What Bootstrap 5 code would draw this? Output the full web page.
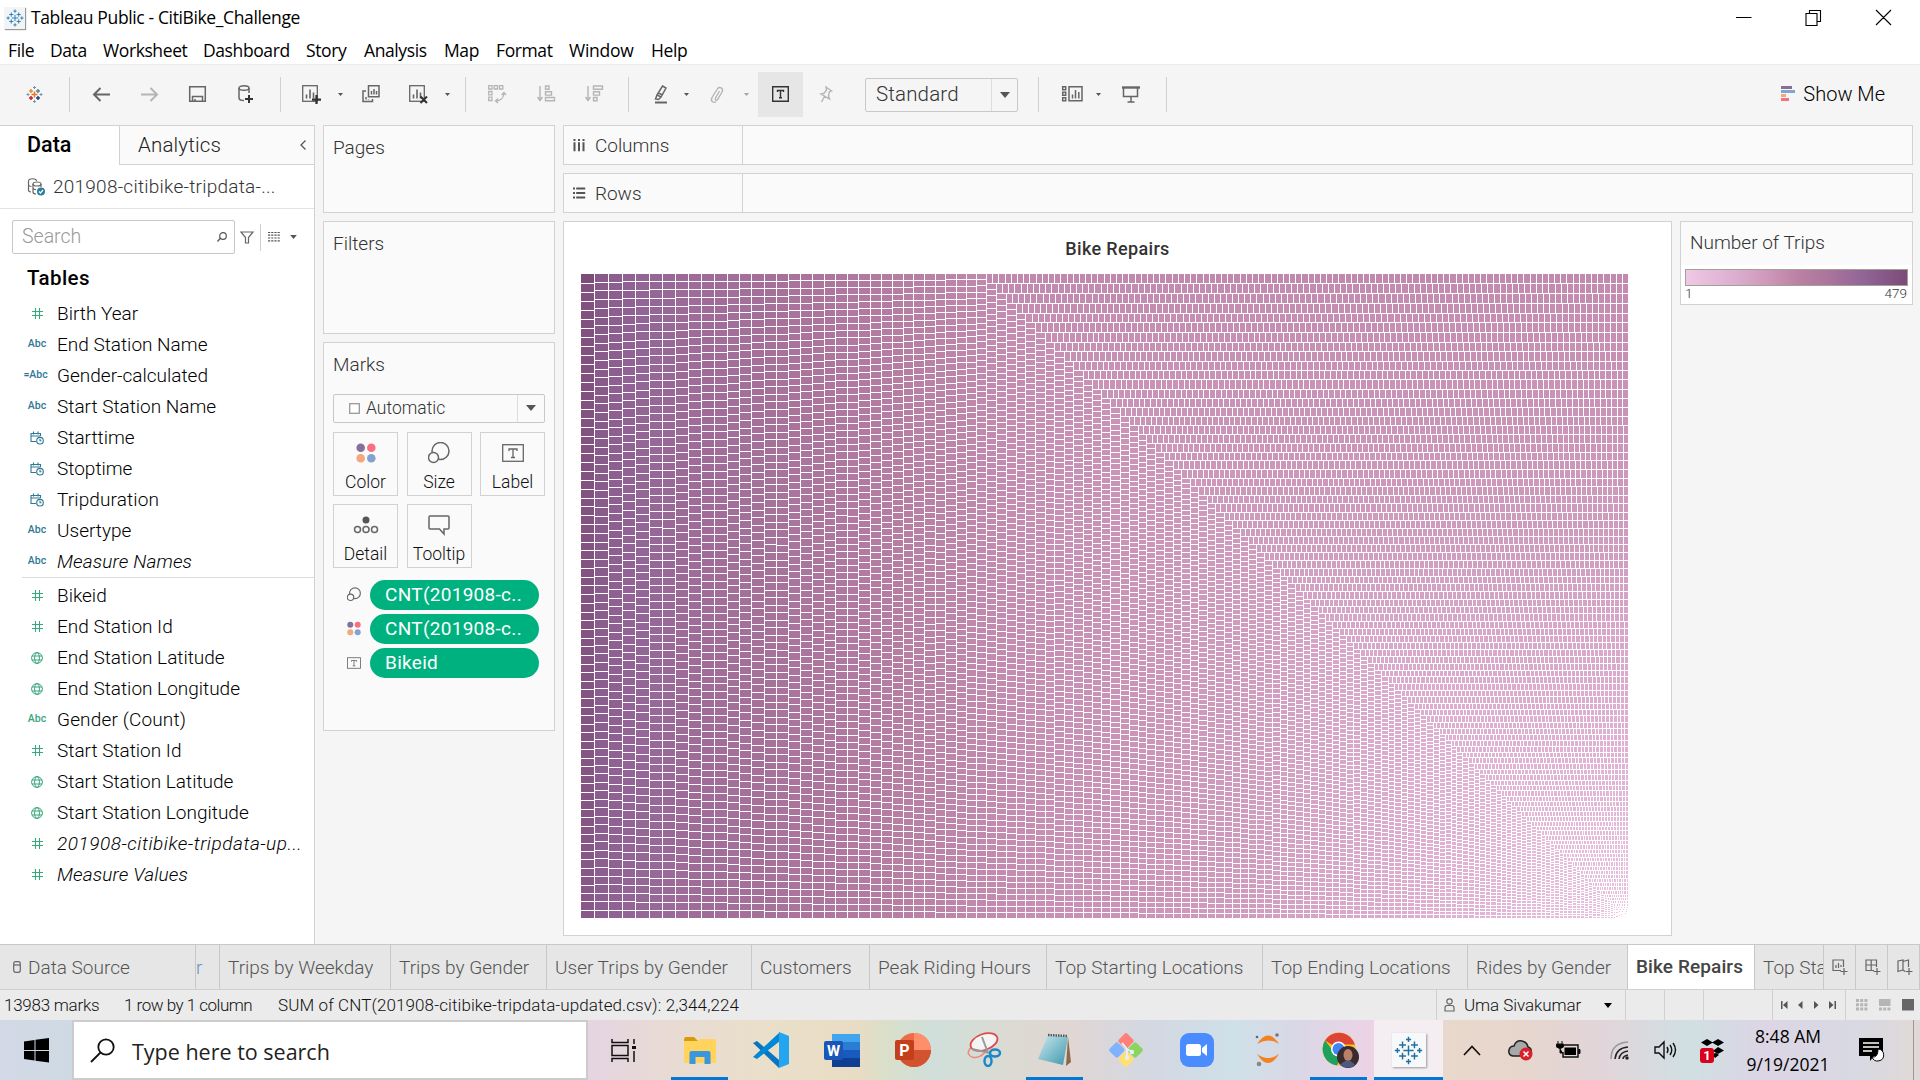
<!DOCTYPE html>
<html lang="en">
<head>
<meta charset="utf-8">
<title>Tableau Public - CitiBike_Challenge</title>
<link href="https://cdn.jsdelivr.net/npm/bootstrap@5.3.0/dist/css/bootstrap.min.css" rel="stylesheet">
<style>
:root{--line:#d2d2d2;--ink:#666}
html,body{height:100%}
body{width:1920px;height:1080px;overflow:hidden;background:#f5f5f5;font-family:Roboto,"Liberation Sans",sans-serif;font-weight:300;font-size:19px;line-height:1;color:#000;white-space:nowrap}
svg{display:block;flex:none;overflow:visible}
.segoe{font-family:"Open Sans","Noto Sans",sans-serif;font-weight:400}
.ln{fill:none;stroke:var(--ink);stroke-width:1.5}
.titlebar{height:34px;padding:1px 0 0 4px}
.titlebar .cap{font-size:17.5px;letter-spacing:-.37px;margin-left:6px}
.appicon{width:21px;height:22px;background:#f2f4f6;box-shadow:1px 1px 1px #999}
.menubar{height:30px;padding:4px 0 0 8px;font-size:17.5px;letter-spacing:-.4px}
.toolbar{height:61px;border-top:1px solid #ececec;padding-bottom:2px}
.slot{height:45px;display:flex;align-items:center;justify-content:center;flex:none}
.vsep{width:1px;height:35px;background:#cfcfcf;flex:none}
.main{height:819px}
.side{width:315px;background:#fff;border-top:1px solid var(--line);border-right:1px solid var(--line)}
.sidetabs{height:39px}
.sidetabs .on{width:119px;padding:0 0 2px 27px;font-weight:500;font-size:21.5px}
.sidetabs .off{background:#fafafa;border-left:1px solid var(--line);border-bottom:1px solid var(--line);font-size:20.5px;letter-spacing:.15px;padding-left:18px;color:#222}
.srcrow{height:44px;border-bottom:1px solid #e2e2e2;padding-left:28px;color:#333}
.searchbox{width:223px;height:34px;border:1px solid #c8c8c8;border-radius:2px;padding:0 6px 0 9px;color:#999;font-size:19.5px}
.tables{font-weight:500;font-size:20.5px;padding:14px 0 0 27px;height:44px;letter-spacing:.4px}
.fld{height:31px;display:flex;align-items:center}
.fld .ic{width:22px;margin-left:26px;margin-right:9px;display:flex;justify-content:center}
.fld.it span{font-style:italic;letter-spacing:.15px}
.fld.it .wide{letter-spacing:.52px}
.abc{font-size:10.5px;font-weight:500;color:#2f7896}
.abc.g{color:#3aa67c}
.pane{background:#fafafa;border:1px solid var(--line);color:#333}
.shelf{height:40px}
.shelf .lab{width:179px;border-right:1px solid var(--line);padding-left:9px;letter-spacing:-.05px}
.cards{width:232px;margin-left:8px}
.cards h6,.leg h6{font-size:19px;font-weight:300;margin:0;color:#333}
.markbtn{width:65px;height:64px;border:1px solid var(--line);background:#fafafa;font-size:17.5px;color:#111;padding:7px 0 3px;border-radius:0}
.sel{border:1px solid #c8c8c8;border-radius:2px}
.pill{width:169px;height:30px;border-radius:15px;background:#00b180;color:#fff;font-weight:400;padding-left:15px;font-size:19px;letter-spacing:.3px}
.viz{width:1109px;background:#fff;border:1px solid var(--line)}
.viz h5{font-size:18px;line-height:18px;font-weight:500;color:#333;margin:18px 0 16px;text-align:center;letter-spacing:.35px}
.leg{width:233px;height:84px;background:#fff}
.leg .top{height:43px;background:#fafafa;padding-left:9px}
.ramp{height:17px;border:1px solid #a89f94;margin:4px 4px 0;background:linear-gradient(90deg,#eec9e5,#dcaed0 22%,#cf9abb 36%,#bc82a4 50%,#aa749c 65%,#926598 80%,#7c4d79 99%)}
.tabs{height:46px;background:#e6e6e6;border-top:1px solid #c8c8c8;border-bottom:1px solid #d0d0d0;color:#555}
.tabs>div{border-right:1px solid #c8c8c8;display:flex;align-items:center;padding-left:8px;overflow:hidden;flex:none}
.status{height:30px;background:#ebebeb;font-size:17px;color:#111}
.status .cell{border-left:1px solid #d0d0d0;height:30px;flex:none;display:flex;align-items:center}
.task{height:60px;background:linear-gradient(90deg,#d3d8e6 0,#cedae3 72px,#e5d5e0 600px,#e8dad4 660px,#eadfca 760px,#e8dcc4 858px,#dadfc9 885px,#d0dfda 930px,#dcdad2 1020px,#e0d6d4 1070px,#d3d8e2 1150px,#cfe0e8 1235px,#dad7e6 1300px,#ecd3e6 1372px,#e8d8cc 1450px,#e6d6cc 1520px,#e2d5da 1600px,#d0dfe2 1690px,#dcd5e5 1765px,#d8d9e2 1860px,#e0d9d8 1915px)}
.task .box{width:516px;height:60px;border:2px solid #ccc;background:#fff;font-size:21.5px;color:#222;padding-left:16px}
.tk{width:71px;height:60px;flex:none;display:flex;align-items:center;justify-content:center}
.run{box-shadow:inset 0 -3px 0 #0078d7}
.clock{font-size:17.5px;width:86px;line-height:28px;letter-spacing:0}
</style>
</head>
<body class="d-flex flex-column">
<svg width="0" height="0" style="display:none">
  <symbol id="hash" viewBox="0 0 11 11"><path d="M3.5 0v11M7.5 0v11M0 3.5h11M0 7.5h11" fill="none" stroke="#3aa67c" stroke-width="1.1"/></symbol>
  <symbol id="globe" viewBox="0 0 12 12"><g fill="none" stroke="#3aa67c"><circle cx="6" cy="6" r="5.4"/><ellipse cx="6" cy="6" rx="2.4" ry="5.4"/><path d="M1 4h10M1 8h10"/></g></symbol>
  <symbol id="cal" viewBox="0 0 14 14"><g fill="none" stroke="#2f7896" stroke-width="1.1"><path d="M6 10.5H1V2.5h9.500v2.500M1 5h9.500M3.500 0.500v3M8 .500v3"/><circle cx="10" cy="9.700" r="3.300"/><path d="M10 7.800v2h1.500"/></g></symbol>
  <symbol id="down" viewBox="0 0 10 6"><path d="M0 0h10L5 6z" fill="#555"/></symbol>
  <symbol id="size" viewBox="0 0 22 22"><g fill="none" stroke="#666"><circle cx="12.500" cy="9" r="8.500"/><circle cx="5.500" cy="15.500" r="5" fill="#fafafa"/></g></symbol>
  <symbol id="dots" viewBox="0 0 20 20"><circle cx="4.700" cy="4.700" r="4.300" fill="#86709a"/><circle cx="15.300" cy="4.700" r="4.300" fill="#f96f80"/><circle cx="4.700" cy="15.300" r="4.300" fill="#f3a77c"/><circle cx="15.300" cy="15.300" r="4.300" fill="#82a4cc"/></symbol>
  <symbol id="tee" viewBox="0 0 22 18"><rect x=".7" y=".7" width="20.600" height="16.600" fill="none" stroke="#666" stroke-width="1.300"/><path d="M7 7V5h8v2M11 5v8.500M9 13.500h4" fill="none" stroke="#666" stroke-width="1.300"/></symbol>
  <symbol id="tab" viewBox="0 0 34 34"><path d="M17 11v12M11 17h12M10 6.500v8M6 10.500h8M24 6.500v8M20 10.500h8M10 19.500v8M6 23.500h8M24 19.500v8M20 23.500h8M17 1v6M14 4h6M17 27v6M14 30h6M4 14v6M1 17h6M30 14v6M27 17h6" fill="none" stroke="currentColor" stroke-width="1.700"/></symbol>
  <symbol id="bars" viewBox="0 0 18 19"><rect x=".7" y=".7" width="14.600" height="15.600" fill="none" stroke="#666" stroke-width="1.300"/><path d="M4.500 9.500v4M8 4.500v9M11.500 7.500v6" stroke="#666" stroke-width="1.600"/></symbol>
  <symbol id="plus" viewBox="0 0 8 8"><path d="M4 0v8M0 4h8" stroke="#333" stroke-width="2"/></symbol>
</svg>

<header class="bg-white">
  <div class="titlebar d-flex align-items-center">
    <div class="appicon d-flex align-items-center justify-content-center" style="color:#1f77b4"><svg width="18" height="18"><use href="#tab"/></svg></div>
    <div class="cap segoe">Tableau Public - CitiBike_Challenge</div>
    <svg class="ms-auto" width="156" height="18" style="margin-right:28px" fill="none" stroke="#000" stroke-width="1.100"><path d="M0 8.500H15.500M73.500 4.500V1.500h11v11h-3M70 4.500h11v12H70zM140 1l15 15M155 1l-15 15"/></svg>
  </div>
  <nav class="menubar segoe d-flex align-items-center">
    <span style="width:42px">File</span><span style="width:53px">Data</span><span style="width:100px">Worksheet</span><span style="width:103px">Dashboard</span><span style="width:58px">Story</span><span style="width:80px">Analysis</span><span style="width:52px">Map</span><span style="width:73px">Format</span><span style="width:82px;letter-spacing:-.25px">Window</span><span>Help</span>
  </nav>
</header>

<div class="toolbar d-flex align-items-center">
  <div class="slot" style="width:69px"><svg width="17" height="17" viewBox="0 0 34 34" fill="none" stroke-width="3"><path d="M17 11v12M11 17h12" stroke="#e8762c"/><path d="M10 6v8M6 10h8" stroke="#eb912c"/><path d="M24 6v8M20 10h8" stroke="#59879b"/><path d="M10 20v8M6 24h8" stroke="#c72035"/><path d="M24 20v8M20 24h8" stroke="#1f447e"/><path d="M17 0v6M14 3h6M4 14v6M1 17h6M17 28v6M14 31h6M30 14v6M27 17h6" stroke="#7099a6" stroke-width="2"/></svg></div>
  <div class="vsep"></div>
  <div class="slot" style="width:48px;margin-left:7px"><svg width="17" height="15" class="ln" style="stroke-width:2"><path d="M17 7.500H1M7.500 1L1 7.500 7.500 14"/></svg></div>
  <div class="slot" style="width:48px"><svg width="17" height="15" fill="none" stroke="#b5b5b5" stroke-width="2"><path d="M0 7.500h16M9.500 1L16 7.500 9.500 14"/></svg></div>
  <div class="slot" style="width:48px"><svg width="17" height="16" class="ln"><path d="M.700.700h15.600v14.600H.700zM3.500 15V10.500h10V15M6 15v-2"/></svg></div>
  <div class="slot" style="width:48px"><svg width="15" height="18" class="ln"><ellipse cx="6" cy="3" rx="5" ry="2.300"/><path d="M1 3v10c0 2 3 2.500 5 2.500M11 3v5"/><path d="M11 10v8M7 14h8" stroke="#333" stroke-width="2"/></svg></div>
  <div class="vsep" style="margin-left:11px"></div>
  <div class="slot" style="width:46px;margin-left:7px"><svg width="19" height="19"><use href="#bars" width="18" height="19"/><use href="#plus" x="10" y="10" width="9" height="9"/></svg></div>
  <div class="slot" style="width:10px;margin-left:1px"><svg width="5" height="3"><use href="#down"/></svg></div>
  <div class="slot" style="width:48px;margin-left:2px"><svg width="18" height="18" class="ln"><path d="M6.500.700h10.500v11H6.500zM4 6H1v10.500h9.500V14M9.500 6v3.500M12 4v5.500M14.500 6v3.500M4 12v2.500M6.500 14v.500"/></svg></div>
  <div class="slot" style="width:46px"><svg width="19" height="19"><use href="#bars" width="18" height="19"/><path d="M11.500 11.500l6.500 6.500M18 11.500L11.500 18" stroke="#333" stroke-width="2"/></svg></div>
  <div class="slot" style="width:10px;margin-left:1px"><svg width="5" height="3"><use href="#down"/></svg></div>
  <div class="vsep" style="margin-left:13px"></div>
  <div class="slot" style="width:48px;margin-left:7px"><svg width="18" height="18" fill="none" stroke="#b5b5b5" stroke-width="1.300"><path d="M.700.700h3.300v3.300H.700zM6.200.700h3.300v3.300H6.200zM11.500.700h3.300v3.300h-3.300zM.700 6.500h3.300v3.300H.700zM.700 12.200h3.300v3.300H.700zM7.500 16c5 0 8.500-3 8.500-8.500M10 13.500L7.500 16l2.500 2M13.500 10L16 7.500l2 2.500"/></svg></div>
  <div class="slot" style="width:49px"><svg width="18" height="18" fill="none" stroke="#b5b5b5" stroke-width="1.400"><path d="M3 1v14M.500 12L3 15.500 5.500 12M8.500 1h3.500v3.300H8.500zM8.500 6.800h6v3.300h-6zM8.500 12.500h9v3.300h-9z"/></svg></div>
  <div class="slot" style="width:48px"><svg width="18" height="18" fill="none" stroke="#b5b5b5" stroke-width="1.400"><path d="M3 1v14M.500 12L3 15.500 5.500 12M8.500 1h9v3.300h-9zM8.500 6.800h6v3.300h-6zM8.500 12.500h3.500v3.300H8.500z"/></svg></div>
  <div class="vsep" style="margin-left:10px"></div>
  <div class="slot" style="width:46px;margin-left:9px"><svg width="14" height="19" class="ln"><path d="M8.500 1l3.500 2-5 9-4-2zM3 10l-1.500 4 3 .500L7 12M4.500 8l4 2"/><path d="M1 17.500h12" stroke-width="2"/></svg></div>
  <div class="slot" style="width:6px;margin-left:-1px"><svg width="5" height="3"><use href="#down"/></svg></div>
  <div class="slot" style="width:55px"><svg width="14" height="17" fill="none" stroke="#b5b5b5" stroke-width="1.400"><path d="M9.500 5L5.500 12c-1 2 1.200 3 2.200 1.300L12 6c2-3.500-2.500-6.500-4.700-3L2 11.500c-2 4 2 6 4 4"/></svg></div>
  <div class="slot" style="width:6px;opacity:.5;margin-left:-1px"><svg width="5" height="3"><use href="#down"/></svg></div>
  <div class="slot" style="width:45px;background:#e6e6e6;margin-left:9px"><svg width="17" height="16" fill="none" stroke="#333" stroke-width="1.400"><path d="M.700.700h15.600v14.600H.700zM5.500 6V4.500h6V6M8.500 4.500v7M7 11.700h3"/></svg></div>
  <div class="slot" style="width:45px"><svg width="14" height="17" fill="none" stroke="#b5b5b5" stroke-width="1.400"><path d="M7 1l5.500 4-2 .500L9.500 10l1 3L2 8l3-.700L7.500 4zM5.500 10.500L2.500 16"/></svg></div>
  <div class="sel d-flex align-items-center" style="width:153px;height:34px;margin:1px 0 0 17px;color:#333;font-size:20.500px;letter-spacing:.150px;padding-left:10px">Standard<div class="ms-auto slot" style="width:26px;height:32px;border-left:1px solid #ddd"><svg width="10" height="6"><use href="#down"/></svg></div></div>
  <div class="vsep" style="margin-left:20px"></div>
  <div class="slot" style="width:50px;margin-left:8px"><svg width="21" height="16" class="ln"><path d="M.700.700h3v3h-3zM.700 6.200h3v3h-3zM.700 11.700h3v3h-3zM7 .700h13v14H7zM10.500 8.500v4M13.500 4v8.500M16.800 6v6.500"/></svg></div>
  <div class="slot" style="width:6px;margin-left:-2px"><svg width="5" height="3"><use href="#down"/></svg></div>
  <div class="slot" style="width:60px"><svg width="18" height="17" class="ln"><path d="M0 1.500h18" stroke-width="2.400"/><path d="M1.500 2v8.500h14V2M9 10.500V16M5.500 16h7"/></svg></div>
  <div class="vsep" style="margin-left:5px"></div>
  <div class="ms-auto d-flex align-items-center" style="margin-right:35px;font-size:20px;gap:8px"><svg width="14" height="16"><path d="M0 0h11v3H0z" fill="#86709a"/><path d="M0 4h14v3H0z" fill="#7ea6cf"/><path d="M0 8h5v3H0z" fill="#f3a77c"/><path d="M0 12h8v3H0z" fill="#f96f80"/></svg>Show Me</div>
</div>

<div class="main d-flex">
  <aside class="side">
    <div class="sidetabs d-flex">
      <div class="on d-flex align-items-center">Data</div>
      <div class="off d-flex align-items-center flex-grow-1">Analytics<svg class="ms-auto" width="6" height="10" style="margin-right:8px" fill="none" stroke="#555" stroke-width="1.300"><path d="M5.500.500L1 5l4.500 4.500"/></svg></div>
    </div>
    <div class="srcrow d-flex align-items-center"><svg width="18" height="18" class="ln" style="stroke-width:1.200"><path d="M3 14c-2 0-2.500-1-2.500-2V3c0-3 8-3 8 0M.500 7c1 1.500 2 1.500 3 1.500"/><ellipse cx="9" cy="6" rx="4" ry="2"/><path d="M5 6v8c0 1.500 1.500 2 3 2M13 6v3M5 10c0 1 1.500 1.500 3 1.500"/><circle cx="13" cy="13.500" r="4" fill="#2b7d9c" stroke="none"/><path d="M11 13.500l1.500 1.500 2.500-3" stroke="#fff"/></svg><span style="margin-left:7px;letter-spacing:.24px">201908-citibike-tripdata-...</span></div>
    <div class="d-flex align-items-center" style="padding:11px 0 0 12px">
      <div class="searchbox d-flex align-items-center">Search<svg class="ms-auto" width="11" height="10" fill="none" stroke="#555" stroke-width="1.200"><circle cx="6" cy="4" r="3.300"/><path d="M3.500 6L.500 9.500"/></svg></div>
      <svg width="14" height="13" style="margin-left:5px" class="ln"><path d="M1 1h12L8.500 6.500V12h-3V6.500z" stroke-width="1.200"/></svg>
      <div class="vsep" style="height:27px;margin:0 7px 0 6px"></div>
      <svg width="12" height="10" stroke="#555" stroke-width="1.200" stroke-dasharray="2.200 1"><path d="M0 .500h12M0 3.200h12M0 6h12M0 8.800h12"/></svg>
      <svg width="7" height="4" style="margin-left:10px"><use href="#down"/></svg>
    </div>
    <div class="tables">Tables</div>
    <div class="fld"><div class="ic"><svg width="11" height="11"><use href="#hash"/></svg></div><span>Birth Year</span></div>
    <div class="fld"><div class="ic abc">Abc</div><span>End Station Name</span></div>
    <div class="fld"><div class="ic abc" style="padding-right:3px">=Abc</div><span>Gender-calculated</span></div>
    <div class="fld"><div class="ic abc">Abc</div><span>Start Station Name</span></div>
    <div class="fld"><div class="ic"><svg width="14" height="14"><use href="#cal"/></svg></div><span>Starttime</span></div>
    <div class="fld"><div class="ic"><svg width="14" height="14"><use href="#cal"/></svg></div><span>Stoptime</span></div>
    <div class="fld"><div class="ic"><svg width="14" height="14"><use href="#cal"/></svg></div><span style="letter-spacing:.120px">Tripduration</span></div>
    <div class="fld"><div class="ic abc">Abc</div><span>Usertype</span></div>
    <div class="fld it"><div class="ic abc">Abc</div><span>Measure Names</span></div>
    <div style="height:1px;background:#ddd;margin:0 0 2px 22px"></div>
    <div class="fld"><div class="ic"><svg width="11" height="11"><use href="#hash"/></svg></div><span>Bikeid</span></div>
    <div class="fld"><div class="ic"><svg width="11" height="11"><use href="#hash"/></svg></div><span>End Station Id</span></div>
    <div class="fld"><div class="ic"><svg width="12" height="12"><use href="#globe"/></svg></div><span>End Station Latitude</span></div>
    <div class="fld"><div class="ic"><svg width="12" height="12"><use href="#globe"/></svg></div><span>End Station Longitude</span></div>
    <div class="fld"><div class="ic abc g">Abc</div><span style="letter-spacing:.150px">Gender (Count)</span></div>
    <div class="fld"><div class="ic"><svg width="11" height="11"><use href="#hash"/></svg></div><span>Start Station Id</span></div>
    <div class="fld"><div class="ic"><svg width="12" height="12"><use href="#globe"/></svg></div><span>Start Station Latitude</span></div>
    <div class="fld"><div class="ic"><svg width="12" height="12"><use href="#globe"/></svg></div><span>Start Station Longitude</span></div>
    <div class="fld it"><div class="ic"><svg width="11" height="11"><use href="#hash"/></svg></div><span class="wide">201908-citibike-tripdata-up...</span></div>
    <div class="fld it"><div class="ic"><svg width="11" height="11"><use href="#hash"/></svg></div><span>Measure Values</span></div>
  </aside>

  <section class="cards d-flex flex-column">
    <div class="pane" style="height:88px;padding:11px 0 0 9px"><h6>Pages</h6></div>
    <div class="pane" style="height:113px;margin-top:8px;padding:11px 0 0 9px"><h6>Filters</h6></div>
    <div class="pane" style="height:389px;margin-top:8px;padding:11px 0 0 9px">
      <h6>Marks</h6>
      <div class="sel d-flex align-items-center" style="width:212px;height:29px;margin-top:17px;padding-left:15px;font-size:17.500px"><svg width="11" height="11" style="margin-right:6px"><rect x=".700" y=".700" width="9.600" height="9.600" fill="#fff" stroke="#999" stroke-width="1.300"/></svg>Automatic<div class="ms-auto slot" style="width:27px;height:27px;border-left:1px solid #ddd"><svg width="10" height="6"><use href="#down"/></svg></div></div>
      <div class="d-flex flex-wrap" style="margin-top:9px;width:212px;gap:8px 8.500px">
        <div class="markbtn d-flex flex-column align-items-center justify-content-between"><svg width="20" height="26"><use href="#dots" y="3" height="20"/></svg>Color</div>
        <div class="markbtn d-flex flex-column align-items-center justify-content-between"><svg width="22" height="26" stroke-width="1.500"><use href="#size" y="2" height="22"/></svg>Size</div>
        <div class="markbtn d-flex flex-column align-items-center justify-content-between"><svg width="22" height="26"><use href="#tee" y="4" height="18"/></svg>Label</div>
        <div class="markbtn d-flex flex-column align-items-center justify-content-between"><svg width="24" height="26" class="ln"><circle cx="12" cy="8" r="3.500" fill="#555" stroke="none"/><circle cx="3.500" cy="17.500" r="3"/><circle cx="12" cy="17.500" r="3"/><circle cx="20.500" cy="17.500" r="3"/></svg>Detail</div>
        <div class="markbtn d-flex flex-column align-items-center justify-content-between"><svg width="22" height="26" class="ln"><path d="M2 4h18q1 0 1 1v11q0 1-1 1h-4v5l-4.500-5H2q-1 0-1-1V5q0-1 1-1z"/></svg>Tooltip</div>
      </div>
      <div class="d-flex flex-column" style="margin-top:12px;gap:4px;padding-left:14px">
        <div class="d-flex align-items-center"><svg width="14" height="15" style="margin-right:9px" stroke-width="1.800"><use href="#size"/></svg><div class="pill d-flex align-items-center">CNT(201908-c..</div></div>
        <div class="d-flex align-items-center"><svg width="14" height="15" style="margin-right:9px"><use href="#dots"/></svg><div class="pill d-flex align-items-center">CNT(201908-c..</div></div>
        <div class="d-flex align-items-center"><svg width="14" height="12" style="margin-right:9px"><use href="#tee"/></svg><div class="pill d-flex align-items-center">Bikeid</div></div>
      </div>
    </div>
  </section>

  <section class="d-flex flex-column" style="margin-left:8px;width:1350px">
    <div class="pane shelf d-flex"><div class="lab d-flex align-items-center"><svg width="12" height="12" stroke="#555" stroke-width="2" style="margin-right:10px"><path d="M1.500 0v2M6 0v2M10.500 0v2M1.500 3.200v9M6 3.200v9M10.500 3.200v9"/></svg>Columns</div></div>
    <div class="pane shelf d-flex" style="margin-top:8px"><div class="lab d-flex align-items-center"><svg width="12" height="12" stroke="#555" stroke-width="2" style="margin-right:10px"><path d="M0 1.500h2M0 6h2M0 10.500h2M3.200 1.500h9M3.200 6h9M3.200 10.500h9"/></svg>Rows</div></div>
    <div class="d-flex" style="margin-top:8px">
      <div class="viz" style="height:715px"><h5>Bike Repairs</h5><svg id="treemap" width="1048" height="645" style="margin-left:17px" shape-rendering="crispEdges"></svg></div>
      <div class="leg pane ms-auto" style="background:#fff"><div class="top d-flex align-items-center"><h6>Number of Trips</h6></div><div class="ramp"></div><div class="d-flex justify-content-between" style="font-size:13.500px;padding:1px 5px 0 4px"><span>1</span><span>479</span></div></div>
    </div>
  </section>
</div>

<nav class="tabs d-flex">
  <div style="width:196px;padding-left:13px"><svg width="8" height="12" class="ln" style="stroke-width:1.200;margin-right:7px"><rect x=".700" y=".700" width="6.600" height="10.600" rx="2"/><path d="M1 4h6"/></svg>Data Source</div>
  <div style="width:24px;padding-left:0;color:#6b8fc0">r</div>
  <div style="width:171px">Trips by Weekday</div>
  <div style="width:156px">Trips by Gender</div>
  <div style="width:205px">User Trips by Gender</div>
  <div style="width:118px">Customers</div>
  <div style="width:177px">Peak Riding Hours</div>
  <div style="width:216px">Top Starting Locations</div>
  <div style="width:205px">Top Ending Locations</div>
  <div style="width:160px">Rides by Gender</div>
  <div style="width:127px;background:#fff;font-weight:500;color:#444;font-size:19px;letter-spacing:.100px;padding-bottom:2px">Bike Repairs</div>
  <div style="width:69px">Top Sta</div>
  <div style="width:32px"><svg width="16" height="16" class="ln" style="stroke-width:1.200"><path d="M9 11.500H1V1h10.500v7M4 6v3M6.500 4v5M9 6v2M12 9v7M8.500 12.500h7"/></svg></div>
  <div style="width:32px;padding-left:9px"><svg width="16" height="16" class="ln" style="stroke-width:1.200"><path d="M9 11.500H1V1h10.500v7M6.200 1v10.500M1 6h10.500M12 9v7M8.500 12.500h7"/></svg></div>
  <div style="width:32px;padding-left:9px"><svg width="16" height="16" class="ln" style="stroke-width:1.200"><path d="M8 12.500L6 11l-5 1.500V2l5-1v10M6 2.500L11.500 1v7M12 9v7M8.500 12.500h7"/></svg></div>
</nav>

<div class="status d-flex align-items-center">
  <span style="margin-left:4px;width:120px;letter-spacing:-.250px">13983 marks</span><span style="width:154px;letter-spacing:-.500px">1 row by 1 column</span><span style="letter-spacing:.100px">SUM of CNT(201908-citibike-tripdata-updated.csv): 2,344,224</span>
  <div class="cell ms-auto" style="width:189px;padding-left:7px"><svg width="11" height="14" class="ln" style="stroke-width:1.200;margin-right:9px"><circle cx="5.500" cy="3.500" r="2.700"/><path d="M1 13V10q0-2.500 2-2.500h5q2 0 2 2.500v3z"/></svg><span style="letter-spacing:-.080px">Uma Sivakumar</span><svg width="8" height="5" style="margin-left:23px"><path d="M0 0h8L4 5z"/></svg></div>
  <div class="cell" style="width:39px"></div><div class="cell" style="width:39px"></div><div class="cell" style="width:69px"></div>
  <div class="cell justify-content-center" style="width:73px"><svg width="56" height="8" fill="#555"><path d="M0 0h1.500v8H0zM6.500 0v8L2 4zM21.500 0v8L17 4zM33 0v8l4.500-4zM48 0v8l4.500-4zM53.500 0H55v8h-1.500z"/></svg></div>
  <div class="cell" style="width:75px;padding-left:10px"><svg width="58" height="12"><path d="M0 0h3v3H0zM4.200 0h3v3h-3zM8.400 0h3v3h-3zM0 4.200h3v3H0zM4.200 4.200h3v3h-3zM8.400 4.200h3v3h-3zM0 8.400h3v3H0zM4.200 8.400h3v3h-3zM8.400 8.400h3v3h-3zM23 0h11.500v7H23zM23 8.400h3v3h-3zM27.200 8.400h3v3h-3zM31.400 8.400h3v3h-3z" fill="#b5b5b5"/><path d="M46 0h12v11.500H46z" fill="#666"/></svg></div>
</div>

<footer class="task d-flex">
  <div style="width:72px" class="d-flex align-items-center justify-content-center"><svg width="25" height="25"><path d="M0 3.500L10.500 2v10H0zM11.500 1.800L25 0v12H11.500zM0 13h10.500v9.500L0 21zM11.500 13H25v11.500l-13.500-1.800z"/></svg></div>
  <div class="box segoe d-flex align-items-center"><svg width="25" height="25" fill="none" stroke="#111" stroke-width="1.800" style="margin-right:17px"><circle cx="16" cy="9" r="7.700"/><path d="M10.500 14.500L1 24"/></svg><span style="padding-top:3px">Type here to search</span></div>
  <div class="tk"><svg width="25" height="23" fill="none" stroke="#111" stroke-width="1.500"><path d="M1 0v3.500h16V0M1 6.500h16v10H1zM1 23v-3.500h16V23M23 0v5M23 12v11"/><path d="M21 7h4v3h-4z" fill="#111" stroke="none"/></svg></div>
  <div style="width:5px"></div>
  <div class="tk"><div class="slot run" style="width:57px;height:60px"><svg width="32" height="27"><path d="M0 3q0-3 2-3h8l4 4H0z" fill="#d99a0a"/><path d="M0 4h14l2-2h14q2 0 2 2v20q0 2-2 2H2q-2 0-2-2z" fill="#ffd35c"/><path d="M5.500 27V16q0-2 2-2h17q2 0 2 2v11h-6v-7h-9v7z" fill="#3a96dd"/></svg></div></div>
  <div class="tk"><svg width="36" height="36" viewBox="0 0 36 36"><path d="M0 11l4-2 22 19v8z" fill="#0a74c0"/><path d="M0 25l4 2L27 9V0z" fill="#0088d6"/><path d="M26 0l10 4v28l-10 4z" fill="#23a5f0"/></svg></div>
  <div class="tk"><svg width="36" height="33"><path d="M8 0h28v9H8z" fill="#41a5ee"/><path d="M8 8h28v8H8z" fill="#2b7cd3"/><path d="M8 16h28v8H8z" fill="#185abd"/><path d="M8 24h28v9H8z" fill="#103f91"/><rect y="7" width="19" height="19" rx="2" fill="#1a56b8"/><text x="9.500" y="22" fill="#fff" font-size="15" font-weight="700" text-anchor="middle">W</text></svg></div>
  <div class="tk"><svg width="36" height="34"><circle cx="19" cy="17" r="17" fill="#ed6c47"/><path d="M19 0a17 17 0 0 1 17 17H19z" fill="#ff8f6b"/><path d="M2 17h34a17 17 0 0 1-34 0z" fill="#d35230"/><rect y="7" width="19" height="20" rx="2" fill="#c43e1c"/><text x="9.500" y="23" fill="#fff" font-size="16" font-weight="700" text-anchor="middle">P</text></svg></div>
  <div class="tk"><svg width="34" height="34" fill="none"><ellipse cx="10" cy="18" rx="9" ry="6" transform="rotate(-20 10 18)" stroke="#e88" stroke-width="1.500"/><ellipse cx="17" cy="9" rx="14" ry="8" transform="rotate(-20 17 9)" fill="#f4f4f4" stroke="#e04a4a" stroke-width="1.800"/><path d="M15 4l6 16M5 16l18 4" stroke="#999" stroke-width="2"/><ellipse cx="28" cy="20" rx="5" ry="3.500" stroke="#1b87c9" stroke-width="2.500"/><ellipse cx="21" cy="28" rx="3.500" ry="5" stroke="#1b87c9" stroke-width="2.500"/></svg></div>
  <div class="tk"><div class="slot run" style="width:57px;height:60px"><svg width="34" height="34"><defs><linearGradient id="np" x2="1" y2="1"><stop stop-color="#cdeaf0"/><stop offset="1" stop-color="#3d97ad"/></linearGradient></defs><path d="M30 4l3 25-5 4z" fill="#8b6a4a"/><path d="M10 2l20 2-5 28L0 26z" fill="url(#np)"/><path d="M10 2l20 1" stroke="#555" stroke-width="2.500" stroke-dasharray="1.500 1"/></svg></div></div>
  <div class="tk"><svg width="36" height="36"><g transform="translate(18 18) rotate(45)"><rect x="-12.500" y="-12.500" width="12" height="12" rx="2" fill="#ff7f7a"/><rect x=".500" y="-12.500" width="12" height="12" rx="2" fill="#8cd35f"/><rect x="-12.500" y=".500" width="12" height="12" rx="2" fill="#80b3ff"/><rect x=".500" y=".500" width="12" height="12" rx="2" fill="#ffe070"/></g><path d="M14 11l5 6v10M19 17l5 3" fill="none" stroke="#e6eef2" stroke-width="2"/><circle cx="24" cy="20" r="2.200" fill="#e6eef2"/><circle cx="19" cy="26" r="2.200" fill="#e6eef2"/></svg></div>
  <div class="tk"><svg width="34" height="34"><rect width="34" height="34" rx="9" fill="#4a8cff"/><rect x="6" y="11" width="15" height="12" rx="2.500" fill="#fff"/><path d="M22 15l5-4v12l-5-4z" fill="#fff"/></svg></div>
  <div class="tk"><svg width="28" height="34"><path d="M3 11Q14-6 25 11 14 4 3 11zM3 21q11 18 22 0-11 8-22 0z" fill="#f58220"/><circle cx="3" cy="4" r="1.300" fill="#666"/><circle cx="23" cy="2" r="1.800" fill="#777"/><circle cx="5" cy="31" r="2.300" fill="#888"/></svg></div>
  <div class="tk"><div class="slot run" style="width:57px;height:60px"><svg width="34" height="38"><circle cx="17" cy="18" r="16.500" fill="#fbc116"/><path d="M17 18L3 9.500a16.500 16.500 0 0 1 28 0l2 4H17z" fill="#dc4437"/><path d="M3 9.500a16.500 16.500 0 0 0 12 25l5-11-6 0z" fill="#1fa15d"/><circle cx="16.500" cy="18" r="7.500" fill="#fff"/><circle cx="16.500" cy="18" r="6" fill="#4285f4"/><circle cx="26" cy="26" r="11" fill="#3a2b2e"/><ellipse cx="26" cy="24" rx="4.500" ry="6" fill="#b98268"/><path d="M18 34q8-9 15 0-7 5-15 0z" fill="#4a5a80"/></svg></div></div>
  <div class="tk run" style="width:69px;background:#f4edf2;color:#1f6f9f"><div class="slot" style="width:34px;height:34px;background:#f6f8fa;box-shadow:1px 1px 2px #999"><svg width="29" height="29"><use href="#tab"/></svg></div></div>
  <div class="slot" style="width:57px;height:60px"><svg width="18" height="11" fill="none" stroke="#111" stroke-width="1.700"><path d="M1 10l8-8.500L17 10"/></svg></div>
  <div class="slot" style="width:40px;height:60px"><svg width="25" height="22"><path d="M5 17q-5-1-4-6 1-4 5-4 2-6 8-5 5 1 6 6 4 1 3 6-1 3-4 3z" fill="#a8a8a8" stroke="#222" stroke-width="1.500"/><circle cx="18" cy="15" r="6.500" fill="#d9212c"/><path d="M15.500 12.500l5 5M20.500 12.500l-5 5" stroke="#fff" stroke-width="1.500"/></svg></div>
  <div class="slot" style="width:56px;height:60px"><svg width="24" height="18"><path d="M6 4h16v12H7v-5" fill="none" stroke="#111" stroke-width="1.500"/><path d="M8.500 6.500h11.500v7.500H8.500z"/><path d="M22.500 8.500H24v4h-1.500zM2 0v3M6 0v3M.500 3h7v3q-3.500 3-7 0zM4 7v5h3" stroke="#111"/></svg></div>
  <div class="slot" style="width:46px;height:60px"><svg width="19" height="19" fill="none" stroke="#222" stroke-width="1.500"><path d="M1 18Q1 2 18 1" stroke="#999"/><path d="M5 18Q6 7 18 6M9 18q1-7 9-8M13 18q0-3 5-4"/><circle cx="17" cy="17" r="1" fill="#222"/></svg></div>
  <div class="slot" style="width:46px;height:60px"><svg width="23" height="18" fill="none" stroke="#111" stroke-width="1.400"><path d="M1 6h4l5-5v16l-5-5H1zM13 6q2 3 0 6M16 4q3.500 5 0 10M19 2q5 7 0 14"/></svg></div>
  <div class="slot" style="width:48px;height:60px"><svg width="25" height="24" style="margin-top:2px"><path d="M7 0l6 3.500L7 7 1 3.500zM18 0l6 3.500L18 7l-6-3.500zM18 8l6 3.500-6 3.500-5-3zM12 15l4-1 3 2-4 3z"/><rect y="9" width="14" height="15" rx="3" fill="#d9001b"/><text x="7" y="21" fill="#fff" font-size="13" font-weight="700" text-anchor="middle">1</text></svg></div>
  <div class="clock segoe d-flex flex-column justify-content-center text-center" style="margin-left:9px"><span>8:48 AM</span><span>9/19/2021</span></div>
  <div class="slot" style="width:80px;height:60px"><svg width="25" height="25"><path d="M0 0h24v18h-9l-4 5v-5H0z"/><path d="M4 5h16M4 9h16M4 13h9" stroke="#fff" stroke-width="1.400"/><path d="M19 11a6 6 0 1 1-6 8q6 1 6-8z" fill="#fff" stroke="#000"/></svg></div>
  <div class="ms-auto" style="width:7px;border-left:1px solid #999"></div>
</footer>

<script src="https://cdn.jsdelivr.net/npm/bootstrap@5.3.0/dist/js/bootstrap.bundle.min.js"></script>
<script>
// Trips per bike, as [rank, trips] knots of the ranked distribution
const knots=[[0,479],[1,448],[70,413],[287,383],[596,357],[929,330],[1290,305],[1848,271],[2387,240],[2894,214],[8030,142],[12350,66],[13400,42],[13800,33],[13982,1]];
// Colour ramp, as [trips, red, green, blue] stops
const ramp=[[1,238,201,229],[66,225,179,213],[100,217,169,204],[145,206,154,189],[200,198,142,179],[218,191,135,171],[250,184,127,164],[290,173,118,159],[312,166,114,155],[355,158,107,154],[383,146,101,150],[405,140,94,143],[418,133,86,132],[479,124,77,121]];
const vals=[];
for(let k=0;k<knots.length-1;k++){
  const [r0,v0]=knots[k],[r1,v1]=knots[k+1];
  for(let r=r0;r<r1;r++)vals.push(v0+(v1-v0)*(r-r0)/(r1-r0));
}
vals.push(1);
const shade=v=>{
  v=Math.round(v);
  let k=0;
  while(k<ramp.length-2&&v>ramp[k+1][0])k++;
  const a=ramp[k],b=ramp[k+1],f=(v-a[0])/(b[0]-a[0]);
  return `rgb(${[1,2,3].map(c=>Math.round(a[c]+(b[c]-a[c])*f)).join()})`;
};
// Squarified treemap with golden-ratio cells and one-pixel gutters
const W=1048,H=645,PHI=(1+Math.sqrt(5))/2,paths={};
let x0=0,y0=0,value=vals.reduce((a,b)=>a+b,0),i=0;
const put=(x,y,X,Y,v)=>{
  const a=Math.round(x),b=Math.round(y),w=Math.round(X)-a-1,h=Math.round(Y)-b-1;
  if(w<1||h<1)return;
  const c=shade(v);
  paths[c]=(paths[c]||'')+`M${a} ${b}h${w}v${h}h${-w}z`;
};
while(i<vals.length){
  const dx=W-x0,dy=H-y0,alpha=Math.max(dy/dx,dx/dy)/(value*PHI);
  let sum=vals[i],j=i+1,beta=sum*sum*alpha,best=Math.max(vals[i]/beta,beta/vals[i]);
  for(;j<vals.length;j++){
    const s=sum+vals[j],b=s*s*alpha,r=Math.max(vals[i]/b,b/vals[j]);
    if(r>best)break;
    sum=s;best=r;
  }
  if(dx<dy+1.5){
    const y1=y0+dy*sum/value;let x=x0;
    for(;i<j;i++){const n=x+dx*vals[i]/sum;put(x,y0,n,y1,vals[i]);x=n;}
    y0=y1;
  }else{
    const x1=x0+dx*sum/value;let y=y0;
    for(;i<j;i++){const n=y+dy*vals[i]/sum;put(x0,y,x1,n,vals[i]);y=n;}
    x0=x1;
  }
  value-=sum;
}
document.getElementById('treemap').innerHTML=Object.entries(paths).map(([c,d])=>`<path fill="${c}" d="${d}"/>`).join('');
</script>
</body>
</html>
